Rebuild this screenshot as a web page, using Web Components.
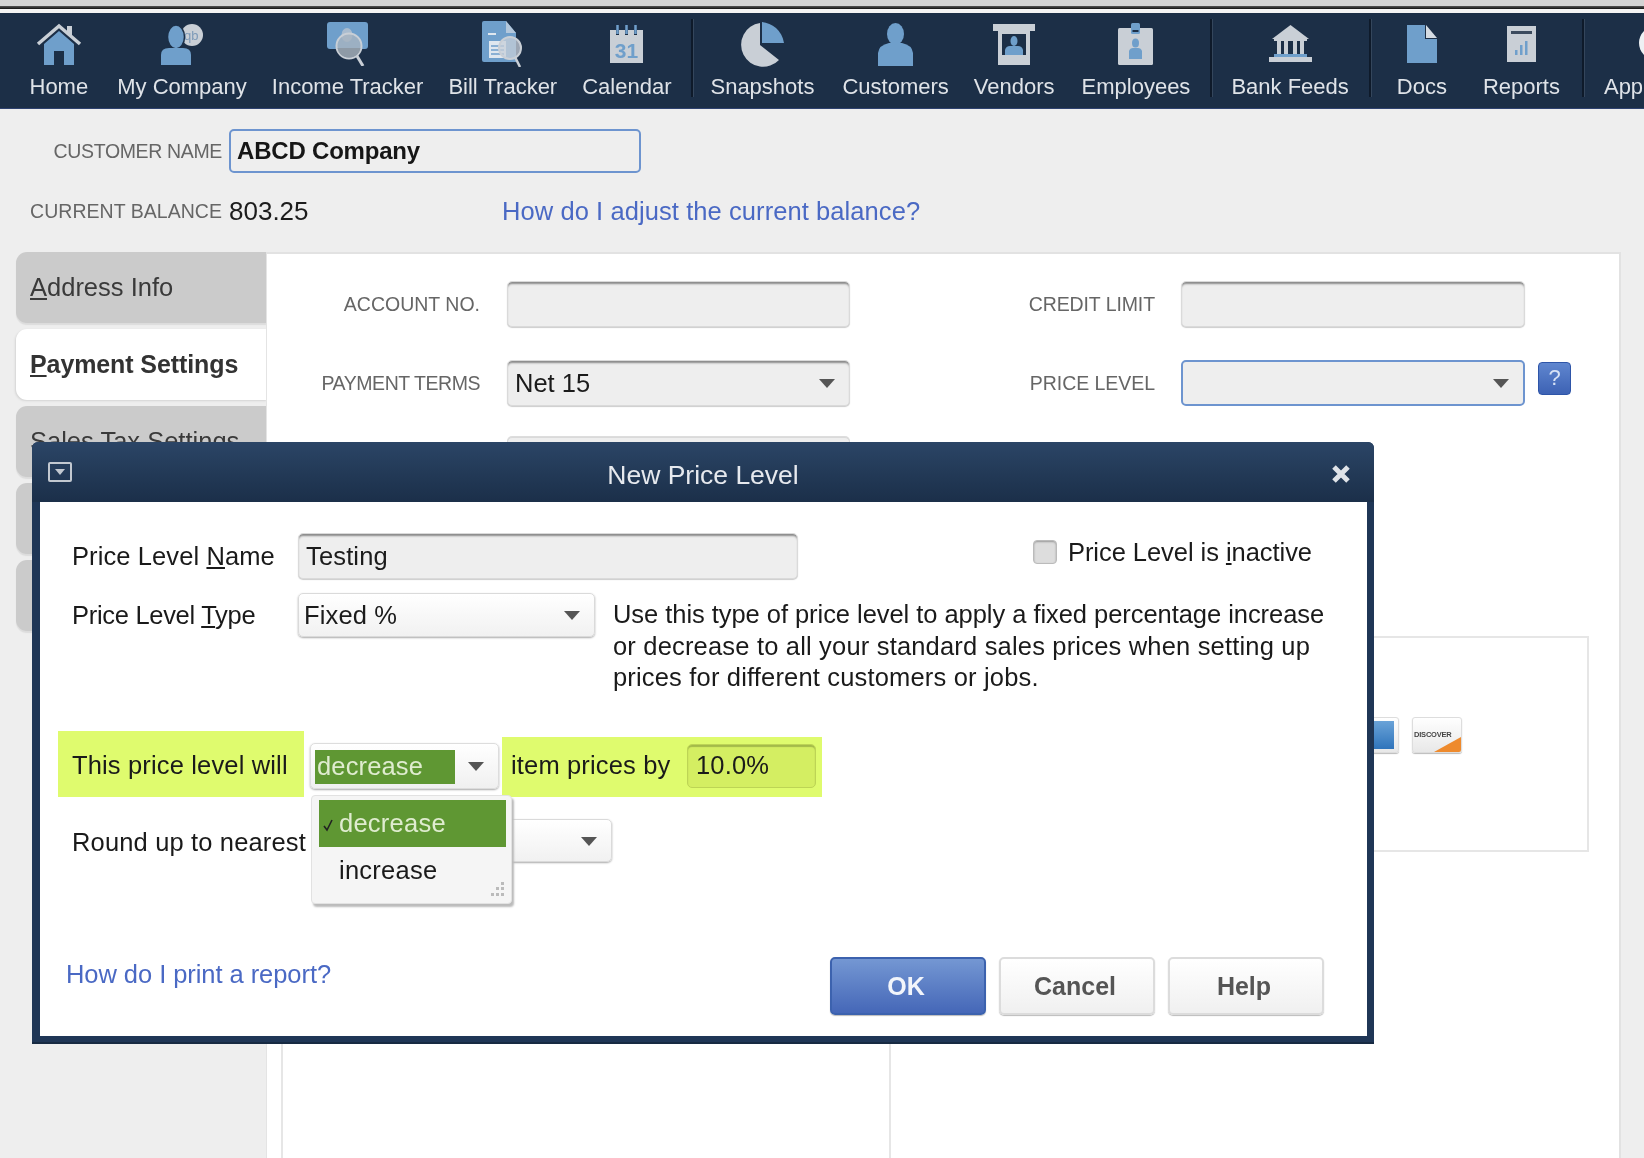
<!DOCTYPE html>
<html>
<head>
<meta charset="utf-8">
<title>New Price Level</title>
<style>
  html, body { margin: 0; padding: 0; background: #eee; }
  body { width: 1644px; height: 1158px; overflow: hidden; font-family: "Liberation Sans", Arial, sans-serif; }
</style>
</head>
<body>
<qb-page>
  <qb-toolbar>
    <qb-navitem label="Home" icon="home" mr="6"></qb-navitem>
    <qb-navitem label="My Company" icon="company" mr="2"></qb-navitem>
    <qb-navitem label="Income Tracker" icon="income" mr="2"></qb-navitem>
    <qb-navitem label="Bill Tracker" icon="bill" mr="2"></qb-navitem>
    <qb-navitem label="Calendar" icon="calendar"></qb-navitem>
    <qb-navsep></qb-navsep>
    <qb-navitem label="Snapshots" icon="snapshots" ml="-2" mr="5"></qb-navitem>
    <qb-navitem label="Customers" icon="customers" mr="2"></qb-navitem>
    <qb-navitem label="Vendors" icon="vendors" mr="4"></qb-navitem>
    <qb-navitem label="Employees" icon="employees"></qb-navitem>
    <qb-navsep></qb-navsep>
    <qb-navitem label="Bank Feeds" icon="bank" mr="1"></qb-navitem>
    <qb-navsep></qb-navsep>
    <qb-navitem label="Docs" icon="docs" ml="6" mr="13"></qb-navitem>
    <qb-navitem label="Reports" icon="reports" mr="3"></qb-navitem>
    <qb-navsep></qb-navsep>
    <qb-navitem label="App" icon="app" edge></qb-navitem>
  </qb-toolbar>

  <qb-customer-head></qb-customer-head>

  <qb-editor>
    <qb-tab slot="tabs" state="off"><u>A</u>ddress Info</qb-tab>
    <qb-tab slot="tabs" state="on"><u>P</u>ayment Settings</qb-tab>
    <qb-tab slot="tabs" state="off">Sales Tax Settings</qb-tab>
    <qb-tab slot="tabs" state="off"></qb-tab>
    <qb-tab slot="tabs" state="off"></qb-tab>
  </qb-editor>

  <qb-dialog heading="New Price Level"></qb-dialog>
</qb-page>

<script>
const BLUE = '#6f9fcb';
const GREY = '#c9cfd6';
const NAVY = '#1c2f47';

const ICONS = {
  home: `<svg width="46" height="42" viewBox="0 0 46 42"><path d="M8 21 23 8 38 21V42H28V28H18V42H8Z" fill="${BLUE}"/><path d="M2 21 23 3 44 21" fill="none" stroke="${GREY}" stroke-width="3.5"/><path d="M31 9V3H36V13" fill="${GREY}"/></svg>`,
  company: `<svg width="42" height="41" viewBox="0 0 42 41"><circle cx="31" cy="11" r="11" fill="${GREY}"/><text x="23" y="16" font-family="Liberation Sans" font-size="13" fill="#7d9ab8">qb</text><ellipse cx="15" cy="13" rx="8.5" ry="12" fill="${BLUE}" stroke="${NAVY}" stroke-width="1.5"/><path d="M0 41V31Q0 24 8 24H22Q30 24 30 31V41Z" fill="${BLUE}"/></svg>`,
  income: `<svg width="41" height="44" viewBox="0 0 41 44"><rect width="41" height="27" rx="3" fill="${BLUE}"/><ellipse cx="20" cy="13" rx="5.5" ry="7" fill="#a9bccf"/><circle cx="22" cy="24" r="12.5" fill="#a8b4c0" fill-opacity=".8" stroke="${GREY}" stroke-width="2"/><path d="M10.5 26H33.5Q32 35 22 35.5 12 35 10.5 26Z" fill="#8e9aa6"/><path d="M30 34 36 44" stroke="${GREY}" stroke-width="3"/></svg>`,
  bill: `<svg width="41" height="46" viewBox="0 0 41 46"><path d="M0 2Q0 0 2 0H24L34 12V41H2Q0 41 0 39Z" fill="${BLUE}"/><path d="M24 0V12H34Z" fill="#b4c8dc"/><path d="M6 13H14" stroke="#dfe7ef" stroke-width="2"/><path d="M7 20H24V37H7Z" fill="#dfe7ef"/><path d="M9 25H22M9 29H22M9 33H22" stroke="${BLUE}" stroke-width="1.6"/><circle cx="28" cy="27" r="11" fill="#c7cfd8" fill-opacity=".75" stroke="${GREY}" stroke-width="2"/><path d="M33 36 38 46" stroke="${GREY}" stroke-width="2.5"/></svg>`,
  calendar: `<svg width="33" height="38" viewBox="0 0 33 38"><path d="M0 5H6V10H9V5H15V10H18V5H24V10H27V5H33V38H0Z" fill="${GREY}"/><path d="M7.5 0V9M16.5 0V9M25.5 0V9" stroke="${BLUE}" stroke-width="2.5"/><text x="16.5" y="33" text-anchor="middle" font-family="Liberation Sans" font-weight="bold" font-size="21" fill="${BLUE}">31</text></svg>`,
  snapshots: `<svg width="48" height="45" viewBox="0 0 48 45"><path d="M22 1A22 22 0 1 0 41 38L22 23Z" fill="${GREY}"/><path d="M24 0C34 1 44 8 46 21H24Z" fill="${BLUE}"/></svg>`,
  customers: `<svg width="35" height="43" viewBox="0 0 35 43"><ellipse cx="17.5" cy="11" rx="8.5" ry="11" fill="${BLUE}"/><path d="M0 43V30Q1 22 11 20H24Q34 22 35 30V43Z" fill="${BLUE}"/></svg>`,
  vendors: `<svg width="42" height="41" viewBox="0 0 42 41"><rect width="42" height="7" fill="${GREY}"/><path d="M5 7H37V41H5Z" fill="${GREY}"/><rect x="9" y="10" width="24" height="21" fill="${NAVY}"/><ellipse cx="21" cy="17" rx="3.5" ry="5" fill="${BLUE}"/><path d="M12 31V26Q13 22 17 22H25Q29 22 30 26V31Z" fill="${BLUE}"/></svg>`,
  employees: `<svg width="35" height="42" viewBox="0 0 35 42"><rect y="5" width="35" height="37" rx="1.5" fill="${GREY}"/><rect x="13" width="9" height="11" rx="1.5" fill="${BLUE}"/><rect x="14.5" y="7" width="6" height="2" fill="${NAVY}"/><ellipse cx="17.5" cy="20" rx="3.5" ry="4.5" fill="${BLUE}"/><path d="M11 36V28Q12 25 15 25H20Q23 25 24 28V36Z" fill="${BLUE}"/></svg>`,
  bank: `<svg width="43" height="38" viewBox="0 0 43 38"><path d="M21.5 0 40 14H3Z" fill="${GREY}"/><rect x="5" y="14" width="33" height="2" fill="${GREY}"/><path d="M8 16H12V29H8ZM15 16H19V29H15ZM24 16H28V29H24ZM31 16H35V29H31Z" fill="${GREY}"/><rect x="5" y="29" width="33" height="3" fill="${BLUE}"/><rect y="32" width="43" height="5" fill="${GREY}"/></svg>`,
  docs: `<svg width="30" height="38" viewBox="0 0 30 38"><path d="M0 0H18V14H30V38H0Z" fill="${BLUE}"/><path d="M19 0 30 13H19Z" fill="#d5dce3"/></svg>`,
  reports: `<svg width="29" height="36" viewBox="0 0 29 36"><rect width="29" height="36" fill="${GREY}"/><rect x="4" y="5" width="21" height="3" fill="#3c4b5e"/><path d="M8 29V24H10.5V29ZM13 29V19H15.5V29ZM18 29V15H20.5V29Z" fill="${BLUE}"/></svg>`,
  app: `<svg width="34" height="38" viewBox="0 0 34 38"><circle cx="17" cy="18" r="17" fill="#eef1f4"/></svg>`
};

// top strip and dark navy icon bar
class QbToolbar extends HTMLElement {
  constructor() {
    super();
    this.attachShadow({ mode: 'open' });
    this.shadowRoot.innerHTML = `
      <style>
        :host { display: block; background: #fff; }
        .strip { height: 6px; background: #d3d3d3; }
        .rule { height: 3px; background: linear-gradient(#555, #111); }
        .gap { height: 4px; background: #f4f4f4; }
        nav {
          display: flex; height: 96px; box-sizing: border-box; padding: 8px 0 0 18px;
          background: ${NAVY}; border-bottom: 1px solid #2e4270; overflow: hidden;
        }
      </style>
      <div class="strip"></div><div class="rule"></div><div class="gap"></div>
      <nav><slot></slot></nav>`;
  }
}

class QbNavitem extends HTMLElement {
  constructor() {
    super();
    this.attachShadow({ mode: 'open' });
  }
  connectedCallback() {
    const mr = this.getAttribute('mr') || 0;
    const ml = this.getAttribute('ml') || 0;
    const edge = this.hasAttribute('edge');
    this.shadowRoot.innerHTML = `
      <style>
        :host {
          display: flex; flex: none; flex-direction: column; align-items: ${edge ? 'flex-start' : 'center'};
          padding: 0 11.5px; margin: 0 ${mr}px 0 ${ml}px; color: #dfe3e8;
          font: 22px/24px "Liberation Sans", Arial, sans-serif;
        }
        .ico { height: 46px; display: flex; align-items: center; ${edge ? 'margin-left: 35px;' : ''} }
        .lbl { margin-top: 8px; white-space: nowrap; }
        svg { display: block; }
      </style>
      <div class="ico">${ICONS[this.getAttribute('icon')] || ''}</div>
      <div class="lbl">${this.getAttribute('label')}</div>`;
  }
}

class QbNavsep extends HTMLElement {
  constructor() {
    super();
    this.attachShadow({ mode: 'open' });
    this.shadowRoot.innerHTML = `
      <style>
        :host {
          display: block; flex: none; width: 2px; height: 78px; margin: -2px 8px 0 8px;
          background: #0e1a2a; box-shadow: 1px 0 0 #34465c;
        }
      </style>`;
  }
}

// one text box or dropdown box
class QbField extends HTMLElement {
  static get observedAttributes() { return ['value']; }
  constructor() {
    super();
    this.attachShadow({ mode: 'open' });
  }
  connectedCallback() { this.render(); }
  attributeChangedCallback() { this.render(); }
  render() {
    const kind = this.getAttribute('kind') || 'input';
    const value = this.getAttribute('value') || '';
    const w = this.getAttribute('w') || '343';
    const h = this.getAttribute('h') || '46';
    this.shadowRoot.innerHTML = `
      <style>
        :host {
          display: flex; flex: none; align-items: center; box-sizing: border-box; position: relative;
          width: ${w}px; height: ${h}px; padding: 0 ${kind === 'plain' ? 5 : 7}px;
          background: ${kind === 'plain' ? 'linear-gradient(#fff, #f1f1f1)' : '#eee'};
          border: 1px solid #dadada; border-radius: 5px;
          box-shadow: ${kind === 'plain' ? '0 1px 2px #aaa' : 'inset 0 3px 2px -1px #8a8a8a, 0 1px 1px #ccc'};
          color: #1b1b1b; font: 25.5px "Liberation Sans", Arial, sans-serif;
        }
        :host([focus]) { border: 2px solid #6d94cf; box-shadow: none; }
        .arrow {
          position: absolute; right: 14px; top: 50%; margin-top: -4px;
          border: 8px solid transparent; border-top: 9px solid #555; border-bottom: 0;
        }
      </style>
      <span>${value}</span>
      ${kind === 'select' || kind === 'plain' ? '<i class="arrow"></i>' : ''}`;
  }
}

class QbCustomerHead extends HTMLElement {
  constructor() {
    super();
    this.attachShadow({ mode: 'open' });
    this.shadowRoot.innerHTML = `
      <style>
        :host { display: block; height: 143px; box-sizing: border-box; padding-top: 20px; font-family: "Liberation Sans", Arial, sans-serif; }
        .row { display: flex; align-items: center; }
        .cap { width: 222px; flex: none; text-align: right; color: #666; font-size: 19.5px; letter-spacing: -.35px; white-space: nowrap; }
        .name {
          box-sizing: border-box; width: 412px; height: 44px; margin-left: 7px; padding-left: 6px;
          display: flex; align-items: center; background: #eee; border: 2px solid #6d94cf; border-radius: 5px;
          font-size: 24px; font-weight: bold; color: #161616; letter-spacing: -.2px;
        }
        .bal { height: 44px; margin-top: 16px; }
        .num { margin-left: 7px; width: 273px; font-size: 26px; color: #1c1c1c; }
        a { color: #4a69c4; font-size: 25.5px; letter-spacing: .08px; text-decoration: none; white-space: nowrap; }
      </style>
      <div class="row">
        <div class="cap">CUSTOMER NAME</div>
        <div class="name">ABCD Company</div>
      </div>
      <div class="row bal">
        <div class="cap" style="letter-spacing:.03px">CURRENT BALANCE</div>
        <div class="num">803.25</div>
        <a>How do I adjust the current balance?</a>
      </div>`;
  }
}

class QbTab extends HTMLElement {
  constructor() {
    super();
    this.attachShadow({ mode: 'open' });
    this.shadowRoot.innerHTML = `
      <style>
        :host {
          display: flex; align-items: center; box-sizing: border-box; height: 71px; padding-left: 14px;
          margin-bottom: 6px; background: #cbcbcb; color: #3a3a3a; border-radius: 11px 0 0 11px;
          font: 25.5px "Liberation Sans", Arial, sans-serif; white-space: nowrap;
          box-shadow: 0 2px 1px #dcdcdc;
        }
        :host([state="on"]) {
          background: #fff; font-weight: bold; font-size: 25px; letter-spacing: -.1px; color: #333;
          box-shadow: -1px 1px 2px #d4d4d4; margin-right: -1px;
        }
      </style>
      <slot></slot>`;
  }
}

// tabs on the left, white payment panel on the right
class QbEditor extends HTMLElement {
  constructor() {
    super();
    this.attachShadow({ mode: 'open' });
    this.shadowRoot.innerHTML = `
      <style>
        :host { display: flex; height: 906px; font-family: "Liberation Sans", Arial, sans-serif; }
        .tabs { width: 250px; margin-left: 16px; flex: none; }
        .panel {
          width: 1355px; flex: none; box-sizing: border-box; background: #fff;
          border-top: 2px solid #e2e2e2; border-right: 2px solid #e2e2e2; border-left: 1px solid #e4e4e4;
          display: flex; flex-direction: column; min-height: 0;
        }
        .form {
          display: grid; grid-template-columns: 213px 370px 305px 370px auto; grid-auto-rows: 46px;
          row-gap: 33px; padding-top: 27px;
        }
        .lab { display: flex; align-items: center; justify-content: flex-end; color: #666; font-size: 19.5px; white-space: nowrap; }
        qb-field { margin-left: 27px; }
        .help {
          width: 33px; height: 33px; margin: 2px 0 0 13px; box-sizing: border-box; border: 1px solid #2e55a8; border-radius: 4px;
          background: linear-gradient(#5f86cf, #3d62b4); color: #d7e2f5; font-size: 22px; text-align: center; line-height: 30px;
        }
        .lower { flex: 1; display: flex; min-height: 0; margin-top: 31px; padding-left: 14px; }
        .left { width: 610px; flex: none; border-left: 2px solid #e6e6e6; border-right: 2px solid #e6e6e6; box-sizing: border-box; }
        .cards {
          width: 698px; height: 216px; box-sizing: border-box; border: 2px solid #e6e6e6; margin-top: 120px;
          display: flex; justify-content: flex-end; gap: 13px; padding: 79px 125px 0 0;
        }
        .card {
          position: relative; width: 50px; height: 36px; box-sizing: border-box; overflow: hidden;
          border-radius: 3px; background: linear-gradient(#fff, #e8e8e8); border: 1px solid #ddd; box-shadow: 0 1px 1px #bbb;
        }
        .amex::after { content: ""; position: absolute; inset: 3px 4px 3px 3px; background: linear-gradient(#6aa3d8, #2f74bb); }
        .disc span {
          position: absolute; left: 1px; top: 12px; font-size: 7.5px; font-weight: bold; letter-spacing: -.2px; color: #444;
        }
        .disc::after {
          content: ""; position: absolute; right: 0; bottom: 0; border-style: solid;
          border-width: 0 0 15px 27px; border-color: transparent transparent #ee8a2d transparent;
        }
      </style>
      <div class="tabs"><slot name="tabs"></slot></div>
      <div class="panel">
        <div class="form">
          <div class="lab">ACCOUNT NO.</div><qb-field></qb-field>
          <div class="lab" style="letter-spacing:-.1px">CREDIT LIMIT</div><qb-field w="344" style="margin-left:26px"></qb-field><div></div>
          <div class="lab" style="letter-spacing:-.45px">PAYMENT TERMS</div><qb-field kind="select" value="Net 15"></qb-field>
          <div class="lab" style="letter-spacing:-.05px">PRICE LEVEL</div><qb-field kind="select" w="344" style="margin-left:26px" focus></qb-field><div class="help">?</div>
          <div></div><qb-field style="margin-top:-2px;box-shadow:0 -1px 0 #ddd"></qb-field>
        </div>
        <div class="lower">
          <div class="left"></div>
          <div class="cards">
            <div class="card amex"></div>
            <div class="card disc"><span>DISCOVER</span></div>
          </div>
        </div>
      </div>`;
  }
}

class QbButton extends HTMLElement {
  constructor() {
    super();
    this.attachShadow({ mode: 'open' });
    this.shadowRoot.innerHTML = `
      <style>
        :host {
          display: flex; align-items: center; justify-content: center; flex: none; box-sizing: border-box;
          width: 156px; height: 58px; padding-right: 4px; border: 2px solid #dcdcdc; border-radius: 5px;
          background: linear-gradient(#fff, #f0f0f0); color: #555; letter-spacing: 0;
          font: bold 25px "Liberation Sans", Arial, sans-serif; box-shadow: 0 1px 1px #bbb;
        }
        :host([primary]) {
          border-color: #3c62ae; background: linear-gradient(#7497d3, #4567b8); color: #f2f5fb;
        }
      </style>
      <slot></slot>`;
  }
}

class QbDialog extends HTMLElement {
  constructor() {
    super();
    this.attachShadow({ mode: 'open' });
  }
  connectedCallback() {
    this.shadowRoot.innerHTML = `
      <style>
        :host {
          position: absolute; left: 32px; top: 442px; width: 1342px; height: 602px; box-sizing: border-box;
          display: flex; flex-direction: column; background: #1f3656; border-radius: 6px 6px 0 0;
          font: 25.5px "Liberation Sans", Arial, sans-serif; color: #1a1a1a; letter-spacing: .15px;
          border-bottom: 2px solid #172a42;
        }
        .bar {
          position: relative; flex: none; height: 60px; box-sizing: border-box; padding-top: 6px; display: flex; align-items: center; justify-content: center;
          background: linear-gradient(#2b4566, #1b2f49); color: #e6e9ee; border-radius: 6px 6px 0 0; font-size: 26.5px; letter-spacing: 0;
        }
        .sysbtn {
          position: absolute; left: 16px; top: 20px; width: 24px; height: 20px; box-sizing: border-box;
          border: 2px solid #c2c8d0; border-radius: 2px; display: flex; align-items: center; justify-content: center;
        }
        .sysbtn i { border: 5px solid transparent; border-top: 6px solid #c2c8d0; border-bottom: 0; }
        .close { position: absolute; right: 23px; top: 22px; }
        .body {
          position: relative; flex: 1; margin: 0 7px 6px 8px; background: #fff; display: flex; flex-direction: column;
        }
        .row { display: flex; }
        .cap { width: 258px; flex: none; box-sizing: border-box; padding-left: 32px; white-space: nowrap; }
        .r1 { margin-top: 31px; height: 46px; align-items: center; }
        .r1 .cap { letter-spacing: .1px; }
        .inactive { display: flex; align-items: center; margin-left: auto; padding-right: 55px; margin-top: -8px; white-space: nowrap; letter-spacing: -.05px; }
        .box { width: 24px; height: 24px; box-sizing: border-box; margin-right: 11px; background: #ddd; border: 1px solid #bbb; border-radius: 4px; box-shadow: inset 0 1px 2px #999; }
        .r2 { margin-top: 14px; }
        .r2 .cap { line-height: 44px; letter-spacing: -.3px; }
        .desc { margin: 6px 0 0 18px; width: 730px; line-height: 31.5px; white-space: nowrap; letter-spacing: -.05px; }
        .desc span { display: block; }
        .r3 { margin-top: 37px; height: 66px; }
        .hl { background: #dffb6e; display: flex; align-items: center; white-space: nowrap; }
        .hl1 { margin-left: 18px; width: 246px; height: 66px; box-sizing: border-box; padding: 4px 0 0 14px; }
        .hl2 { margin: 6px 0 0 3px; width: 320px; height: 60px; box-sizing: border-box; padding: 0 0 2px 9px; }
        .hl2 span { width: 176px; flex: none; }
        .num {
          box-sizing: border-box; width: 129px; height: 44px; padding-left: 8px; display: flex; align-items: center;
          background: #d4ee62; border: 1px solid #bdd455; border-radius: 5px; box-shadow: inset 0 2px 1px #a4ba4a;
        }
        .sel {
          position: relative; box-sizing: border-box; flex: none; margin: 12px 0 0 6px; width: 189px; height: 46px; padding: 6px 0 0 4px;
          background: linear-gradient(#fff, #f0f0f0); border: 1px solid #ddd; border-radius: 5px; box-shadow: 0 1px 2px #aaa;
        }
        .sel b {
          display: block; width: 140px; height: 34px; box-sizing: border-box; padding-left: 2px; font-weight: normal;
          line-height: 33px; background: #5f9733; color: #dfeccf;
        }
        .sel i { position: absolute; right: 14px; top: 18px; border: 8px solid transparent; border-top: 9px solid #555; border-bottom: 0; }
        .r4 { margin-top: 24px; height: 43px; align-items: center; }
        .r4 .cap { width: auto; white-space: nowrap; }
        .r4 qb-field { position: absolute; left: 452px; top: 317px; }
        .foot { margin-top: auto; padding: 0 43px 21px 26px; display: flex; align-items: flex-start; gap: 13px; }
        .foot a { margin: 3px auto 0 0; color: #4a69c4; white-space: nowrap; letter-spacing: -.06px; }
        .menu {
          position: absolute; left: 271px; top: 293px; width: 201px; height: 109px; box-sizing: border-box;
          background: #f5f5f5; border: 1px solid #e2e2e2; border-radius: 4px; box-shadow: 2px 3px 2px #bbb; padding: 4px 5px 0 7px;
        }
        .it { position: relative; height: 47px; box-sizing: border-box; padding-left: 20px; line-height: 47px; letter-spacing: .25px; }
        .it.on { background: #5f9733; color: #dfeccf; }
        .it svg { position: absolute; left: 2px; top: 18px; }
        .grip { position: absolute; right: 6px; bottom: 6px; }
      </style>
      <div class="bar">
        <div class="sysbtn"><i></i></div>
        ${this.getAttribute('heading')}
        <svg class="close" width="20" height="20" viewBox="0 0 20 20"><path d="M3 3 17 17M17 3 3 17" stroke="#dfe3e8" stroke-width="5"/></svg>
      </div>
      <div class="body">
        <div class="row r1">
          <div class="cap">Price Level <u>N</u>ame</div>
          <qb-field w="500" value="Testing"></qb-field>
          <div class="inactive"><span class="box"></span><span>Price Level is <u>i</u>nactive</span></div>
        </div>
        <div class="row r2">
          <div class="cap">Price Level <u>T</u>ype</div>
          <qb-field kind="plain" w="297" h="44" value="Fixed %"></qb-field>
          <div class="desc">
            <span>Use this type of price level to apply a fixed percentage increase</span>
            <span style="letter-spacing:.18px">or decrease to all your standard sales prices when setting up</span>
            <span style="letter-spacing:.17px">prices for different customers or jobs.</span>
          </div>
        </div>
        <div class="row r3">
          <div class="hl hl1">This price level will</div>
          <div class="sel"><b>decrease</b><i></i></div>
          <div class="hl hl2"><span>item prices by</span><div class="num">10.0%</div></div>
        </div>
        <div class="row r4">
          <div class="cap">Round up to nearest</div>
          <qb-field kind="plain" w="120" h="43"></qb-field>
        </div>
        <div class="foot">
          <a>How do I print a report?</a>
          <qb-button primary>OK</qb-button>
          <qb-button>Cancel</qb-button>
          <qb-button>Help</qb-button>
        </div>
        <div class="menu">
          <div class="it on"><svg width="14" height="14" viewBox="0 0 14 14"><path d="M3 8 6 12 11 2" fill="none" stroke="#222" stroke-width="1.6"/></svg>decrease</div>
          <div class="it">increase</div>
          <svg class="grip" width="16" height="16" viewBox="0 0 16 16" fill="#bbb"><rect x="12" y="1" width="3" height="3"/><rect x="7" y="6" width="3" height="3"/><rect x="12" y="6" width="3" height="3"/><rect x="2" y="12" width="3" height="3"/><rect x="7" y="12" width="3" height="3"/><rect x="12" y="12" width="3" height="3"/></svg>
        </div>
      </div>`;
  }
}

class QbPage extends HTMLElement {
  constructor() {
    super();
    this.attachShadow({ mode: 'open' });
    this.shadowRoot.innerHTML = `
      <style>
        :host { display: block; position: relative; width: 1644px; height: 1158px; overflow: hidden; background: #eee; filter: blur(.45px); }
      </style>
      <slot></slot>`;
  }
}

customElements.define('qb-field', QbField);
customElements.define('qb-button', QbButton);
customElements.define('qb-navitem', QbNavitem);
customElements.define('qb-navsep', QbNavsep);
customElements.define('qb-toolbar', QbToolbar);
customElements.define('qb-customer-head', QbCustomerHead);
customElements.define('qb-tab', QbTab);
customElements.define('qb-editor', QbEditor);
customElements.define('qb-dialog', QbDialog);
customElements.define('qb-page', QbPage);
</script>
</body>
</html>
